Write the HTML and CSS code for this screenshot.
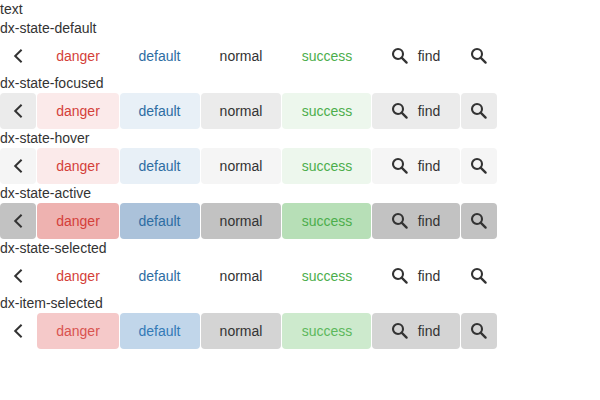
FILE: index.html
```
<!DOCTYPE html>
<html lang="en">
<head>
<meta charset="utf-8">
<title>Buttons</title>
<link rel="stylesheet" href="styles.css">
</head>
<body>
<svg width="0" height="0" class="defs">
  <symbol id="back" viewBox="0 0 18 18"><path d="M12.600 2.700 6.200 9l6.400 6.300" fill="none" stroke="currentColor" stroke-width="2"/></symbol>
  <symbol id="find" viewBox="0 0 18 18"><circle cx="7" cy="7" r="5" fill="none" stroke="currentColor" stroke-width="2.100"/><path d="M10.600 10.600 15.600 15.600" fill="none" stroke="currentColor" stroke-width="2.300" stroke-linecap="round"/></symbol>
</svg>
<div class="title">text</div>
<main id="groups"></main>
<script src="script.js"></script>
</body>
</html>
```
FILE: styles.css
```
body {
  margin: 0;
  background: #fff;
  color: #333;
  font: 14px/19px "Liberation Sans", Arial, sans-serif;
}
.defs { position: absolute; }
.label { height: 19px; }
.row { display: flex; gap: 1px; height: 36px; }
.button {
  display: flex;
  align-items: center;
  justify-content: center;
  box-sizing: border-box;
  height: 36px;
  border-radius: 4px;
}
.icon { width: 18px; height: 18px; }
.back, .search { width: 36px; }
.danger { width: 82px; color: #d43f3a; }
.default { width: 80px; padding-right: 1px; color: #2d6da3; }
.normal { width: 80px; }
.success { width: 89px; padding-left: 1px; color: #4cae4c; }
.find { width: 88px; gap: 9px; padding-right: 1px; }
.search { padding-right: 1px; }

.focused .button { background: #ebebeb; }
.focused .danger { background: #fbeaea; }
.focused .default { background: #e8f0f7; }
.focused .success { background: #edf7ed; }

.hover .button { background: #f5f5f5; }
.hover .danger { background: #fbeaea; }
.hover .default { background: #e8f0f7; }
.hover .success { background: #edf7ed; }

.active .button { background: #c2c2c2; }
.active .danger { background: #eeb2b0; }
.active .default { background: #abc2da; }
.active .success { background: #b7dfb7; }

.item .button { background: #d4d4d4; }
.item .back { background: none; }
.item .danger { background: #f5c9c9; color: #d9534f; }
.item .default { background: #c1d6ea; color: #337ab7; }
.item .success { background: #cdeacd; color: #5cb85c; }
```
FILE: script.js
```
const states = [
  ["dx-state-default", "plain"],
  ["dx-state-focused", "focused"],
  ["dx-state-hover", "hover"],
  ["dx-state-active", "active"],
  ["dx-state-selected", "plain"],
  ["dx-item-selected", "item"]
];
const icon = name => `<svg class="icon"><use href="#${name}"/></svg>`;
document.getElementById("groups").innerHTML = states.map(([label, cls]) => `
<section class="${cls}">
  <div class="label">${label}</div>
  <div class="row">
    <div class="button back">${icon("back")}</div>
    <div class="button danger">danger</div>
    <div class="button default">default</div>
    <div class="button normal">normal</div>
    <div class="button success">success</div>
    <div class="button find">${icon("find")}<span>find</span></div>
    <div class="button search">${icon("find")}</div>
  </div>
</section>`).join("");
```
